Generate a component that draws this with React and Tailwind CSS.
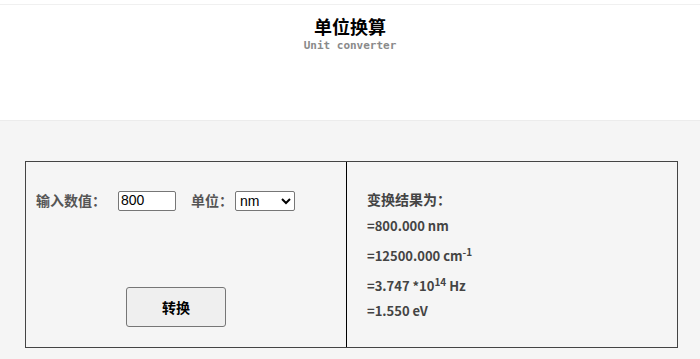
import { useState } from "react";

export default function App() {
  const [value, setValue] = useState("800");
  const [unit, setUnit] = useState("nm");

  return (
    <div className="w-[700px] h-[359px] overflow-hidden bg-[#f5f5f5] font-['Noto_Sans_CJK_SC',sans-serif]">
      {/* header */}
      <header className="h-[121px] bg-white border-b border-[#ececec]">
        <div className="h-[5px] border-b border-[#f0f0f0]" />
        <div className="flex flex-col items-center pt-[8px]">
          <h1 className="text-[18px] leading-[26px] font-bold text-black">单位换算</h1>
          <p className="text-[11px] leading-[14px] font-bold text-[#8a8a8a] font-['DejaVu_Sans_Mono',monospace]">
            Unit converter
          </p>
        </div>
      </header>

      {/* converter */}
      <main className="pt-[40px] pl-[25px]">
        <div className="flex w-[653px] h-[187px] border border-[#444]">
          <section className="w-[320px] flex flex-col">
            <div className="flex items-center pl-[10px] pt-[28px] text-[14px] font-bold text-[#555]">
              <span>输入数值：</span>
              <input
                value={value}
                onChange={(e) => setValue(e.target.value)}
                className="ml-[12px] w-[58px] h-[20px] px-[2px] bg-white border border-[#767676] rounded-[2px] text-[14px] font-normal text-black font-['Liberation_Sans',sans-serif]"
              />
              <span className="ml-[15px]">单位：</span>
              <select
                value={unit}
                onChange={(e) => setUnit(e.target.value)}
                className="ml-[2px] w-[60px] h-[20px] bg-white border border-[#767676] rounded-[2px] text-[14px] font-normal text-black font-['Liberation_Sans',sans-serif]"
              >
                <option>nm</option>
                <option>cm-1</option>
                <option>Hz</option>
                <option>eV</option>
              </select>
            </div>
            <div className="pl-[100px] pt-[76px]">
              <button className="w-[100px] h-[40px] bg-[#efefef] border border-[#767676] rounded-[3px] text-[14px] font-bold text-black">
                转换
              </button>
            </div>
          </section>
          <section className="flex-1 border-l border-black pl-[20px] pt-[27px] text-[13px] font-semibold text-[#444] leading-[20px]">
            <p className="text-[14px]">变换结果为：</p>
            <p className="mt-[7px]">=800.000 nm</p>
            <p className="mt-[10px]">
              =12500.000 cm<sup className="text-[10px] leading-none">-1</sup>
            </p>
            <p className="mt-[10px]">
              =3.747 *10<sup className="text-[10px] leading-none">14</sup> Hz
            </p>
            <p className="mt-[5px]">=1.550 eV</p>
          </section>
        </div>
      </main>
    </div>
  );
}
